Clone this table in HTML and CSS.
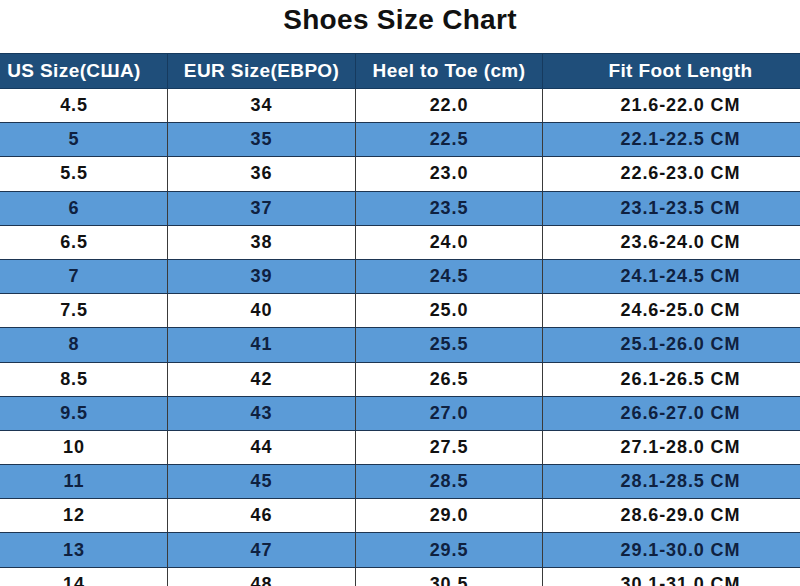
FILE: index.html
```html
<!DOCTYPE html>
<html>
<head>
<meta charset="utf-8">
<link rel="stylesheet" href="styles.css">
</head>
<body>
<div class="page">
  <h1 class="title">Shoes Size Chart</h1>
  <table class="chart">
    <colgroup>
      <col class="c1"><col class="c2"><col class="c3"><col class="c4">
    </colgroup>
    <thead>
      <tr><th>US Size(США)</th><th>EUR Size(ЕВРО)</th><th>Heel to Toe (cm)</th><th>Fit Foot Length</th></tr>
    </thead>
    <tbody>
      <tr><td>4.5</td><td>34</td><td>22.0</td><td>21.6-22.0 CM</td></tr>
      <tr class="alt"><td>5</td><td>35</td><td>22.5</td><td>22.1-22.5 CM</td></tr>
      <tr><td>5.5</td><td>36</td><td>23.0</td><td>22.6-23.0 CM</td></tr>
      <tr class="alt"><td>6</td><td>37</td><td>23.5</td><td>23.1-23.5 CM</td></tr>
      <tr><td>6.5</td><td>38</td><td>24.0</td><td>23.6-24.0 CM</td></tr>
      <tr class="alt"><td>7</td><td>39</td><td>24.5</td><td>24.1-24.5 CM</td></tr>
      <tr><td>7.5</td><td>40</td><td>25.0</td><td>24.6-25.0 CM</td></tr>
      <tr class="alt"><td>8</td><td>41</td><td>25.5</td><td>25.1-26.0 CM</td></tr>
      <tr><td>8.5</td><td>42</td><td>26.5</td><td>26.1-26.5 CM</td></tr>
      <tr class="alt"><td>9.5</td><td>43</td><td>27.0</td><td>26.6-27.0 CM</td></tr>
      <tr><td>10</td><td>44</td><td>27.5</td><td>27.1-28.0 CM</td></tr>
      <tr class="alt"><td>11</td><td>45</td><td>28.5</td><td>28.1-28.5 CM</td></tr>
      <tr><td>12</td><td>46</td><td>29.0</td><td>28.6-29.0 CM</td></tr>
      <tr class="alt"><td>13</td><td>47</td><td>29.5</td><td>29.1-30.0 CM</td></tr>
      <tr><td>14</td><td>48</td><td>30.5</td><td>30.1-31.0 CM</td></tr>
    </tbody>
  </table>
</div>
</body>
</html>
```
FILE: styles.css
```css
html, body {
  margin: 0;
  padding: 0;
  background: #ffffff;
  overflow: hidden;
}
.page {
  width: 800px;
  height: 586px;
  overflow: hidden;
  font-family: "Liberation Sans", Arial, sans-serif;
}
.title {
  margin: 0;
  padding-top: 1px;
  height: 52px;
  line-height: 38px;
  font-size: 28px;
  font-weight: bold;
  letter-spacing: 0.3px;
  text-align: center;
  color: #111111;
}
.chart {
  margin-left: -20px;
  width: 838px;
  table-layout: fixed;
  border-collapse: collapse;
}
.c1 { width: 187px; }
.c2 { width: 188px; }
.c3 { width: 187px; }
.c4 { width: 276px; }
.chart th {
  height: 35px;
  padding: 0;
  background: #1f4e7a;
  color: #ffffff;
  font-size: 19px;
  font-weight: bold;
  letter-spacing: 0.4px;
  text-align: center;
  border: 1px solid #163a5e;
  box-sizing: border-box;
}
.chart td {
  height: 34.2px;
  padding: 0;
  font-size: 18px;
  font-weight: bold;
  letter-spacing: 0.9px;
  text-align: center;
  color: #111111;
  border-left: 1px solid #3a3a3a;
  border-right: 1px solid #3a3a3a;
  border-bottom: 1px solid #1d3552;
  box-sizing: border-box;
}
.chart tr.alt td {
  background: #5b9bd7;
  color: #0f2140;
}
```
